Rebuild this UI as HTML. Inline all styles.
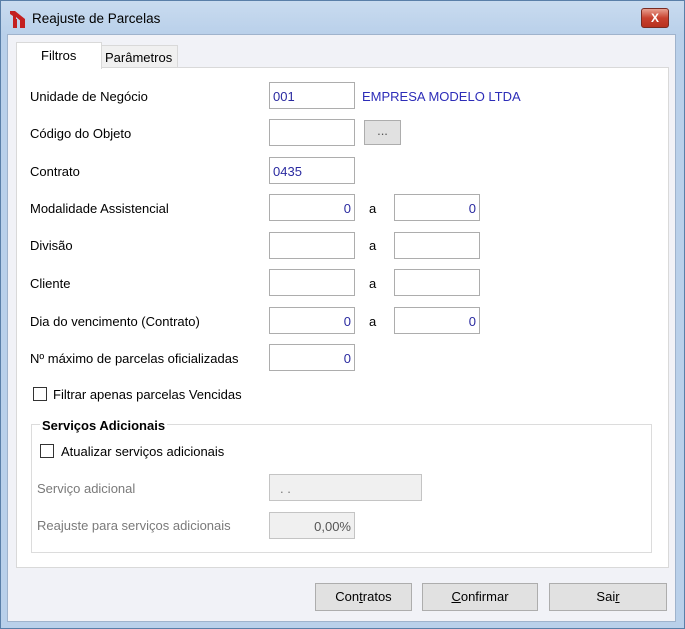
<!DOCTYPE html>
<html><head><meta charset="utf-8"><style>
*{box-sizing:border-box;margin:0;padding:0}
body{width:685px;height:629px;overflow:hidden;font-family:"Liberation Sans",sans-serif;font-size:13px;color:#000;background:#c0d4ea;position:relative}
.win{position:absolute;left:0;top:0;width:685px;height:629px;border:1px solid #5a7fa8;background:linear-gradient(#c9dbef,#b9d0ea 34px);}
.body{position:absolute;left:7px;top:34px;width:669px;height:588px;background:#f1f2f7;border:1px solid #9fb3cc}
.a{position:absolute;white-space:nowrap}
.in{position:absolute;height:27px;background:#fff;border:1px solid #adadad;color:#2a2aa0;padding:6px 3px;font-size:13px}
.r{text-align:right}
.dis{background:#f0f0f0;border-color:#c4c4c4;color:#777}
.btn{position:absolute;height:28px;background:#e1e1e1;border:1px solid #adadad;text-align:center;line-height:26px}
.cb{position:absolute;width:14px;height:14px;border:1px solid #333;background:#fff}
.g{color:#7a7a7a}
</style></head><body>
<div class="win">
<svg class="a" style="left:8px;top:9px" width="17" height="18" viewBox="0 0 17 18"><path d="M1 1h5l10 8v9h-3v-6l-6-5v11H4V6L1 4z" fill="#c42020"/><rect x="5" y="9" width="3" height="9" fill="#c42020"/><rect x="11" y="9" width="3" height="9" fill="#c42020"/></svg>
<div class="a" style="left:31px;top:10px;font-size:13.5px">Reajuste de Parcelas</div>
<div class="a" style="left:640px;top:7px;width:28px;height:20px;border-radius:3px;border:1px solid #7a2a20;background:linear-gradient(#e8a090,#c8412e 50%,#b8301e);color:#fff;font-weight:bold;text-align:center;line-height:18px;font-size:12px">X</div>
</div>
<div class="body"></div>
<div class="a" style="left:101px;top:45px;width:77px;height:23px;background:#f0f0f0;border:1px solid #d9d9d9;padding:4px 3px">Parâmetros</div>
<div class="a" style="left:16px;top:67px;width:653px;height:501px;background:#fff;border:1px solid #d9d9d9"></div>
<div class="a" style="left:16px;top:42px;width:86px;height:27px;background:#fff;border:1px solid #d9d9d9;border-bottom:none;padding:5px 0 0 24px">Filtros</div>

<div class="a" style="left:30px;top:89px">Unidade de Negócio</div>
<div class="a" style="left:30px;top:126px">Código do Objeto</div>
<div class="a" style="left:30px;top:164px">Contrato</div>
<div class="a" style="left:30px;top:201px">Modalidade Assistencial</div>
<div class="a" style="left:30px;top:238px">Divisão</div>
<div class="a" style="left:30px;top:276px">Cliente</div>
<div class="a" style="left:30px;top:314px">Dia do vencimento (Contrato)</div>
<div class="a" style="left:30px;top:351px">Nº máximo de parcelas oficializadas</div>

<div class="in" style="left:269px;top:82px;width:86px">001</div>
<div class="a" style="left:362px;top:89px;color:#2d2db8">EMPRESA MODELO LTDA</div>
<div class="in" style="left:269px;top:119px;width:86px"></div>
<div class="btn" style="left:364px;top:120px;width:37px;height:25px;line-height:20px;color:#555">...</div>
<div class="in" style="left:269px;top:157px;width:86px">0435</div>
<div class="in r" style="left:269px;top:194px;width:86px">0</div>
<div class="in r" style="left:394px;top:194px;width:86px">0</div>
<div class="in" style="left:269px;top:232px;width:86px"></div>
<div class="in" style="left:394px;top:232px;width:86px"></div>
<div class="in" style="left:269px;top:269px;width:86px"></div>
<div class="in" style="left:394px;top:269px;width:86px"></div>
<div class="in r" style="left:269px;top:307px;width:86px">0</div>
<div class="in r" style="left:394px;top:307px;width:86px">0</div>
<div class="in r" style="left:269px;top:344px;width:86px">0</div>
<div class="a" style="left:369px;top:201px">a</div>
<div class="a" style="left:369px;top:238px">a</div>
<div class="a" style="left:369px;top:276px">a</div>
<div class="a" style="left:369px;top:314px">a</div>

<div class="cb" style="left:33px;top:387px"></div>
<div class="a" style="left:53px;top:387px">Filtrar apenas parcelas Vencidas</div>

<div class="a" style="left:31px;top:424px;width:621px;height:129px;border:1px solid #dcdcdc"></div>
<div class="a" style="left:40px;top:418px;background:#fff;padding:0 2px;font-weight:bold">Serviços Adicionais</div>
<div class="cb" style="left:40px;top:444px"></div>
<div class="a" style="left:61px;top:444px">Atualizar serviços adicionais</div>
<div class="a g" style="left:37px;top:481px">Serviço adicional</div>
<div class="in dis" style="left:269px;top:474px;width:153px;padding-left:10px">. .</div>
<div class="a g" style="left:37px;top:518px">Reajuste para serviços adicionais</div>
<div class="in dis r" style="left:269px;top:512px;width:86px;color:#555">0,00%</div>

<div class="btn" style="left:315px;top:583px;width:97px">Con<u>t</u>ratos</div>
<div class="btn" style="left:422px;top:583px;width:116px"><u>C</u>onfirmar</div>
<div class="btn" style="left:549px;top:583px;width:118px">Sai<u>r</u></div>
</body></html>
